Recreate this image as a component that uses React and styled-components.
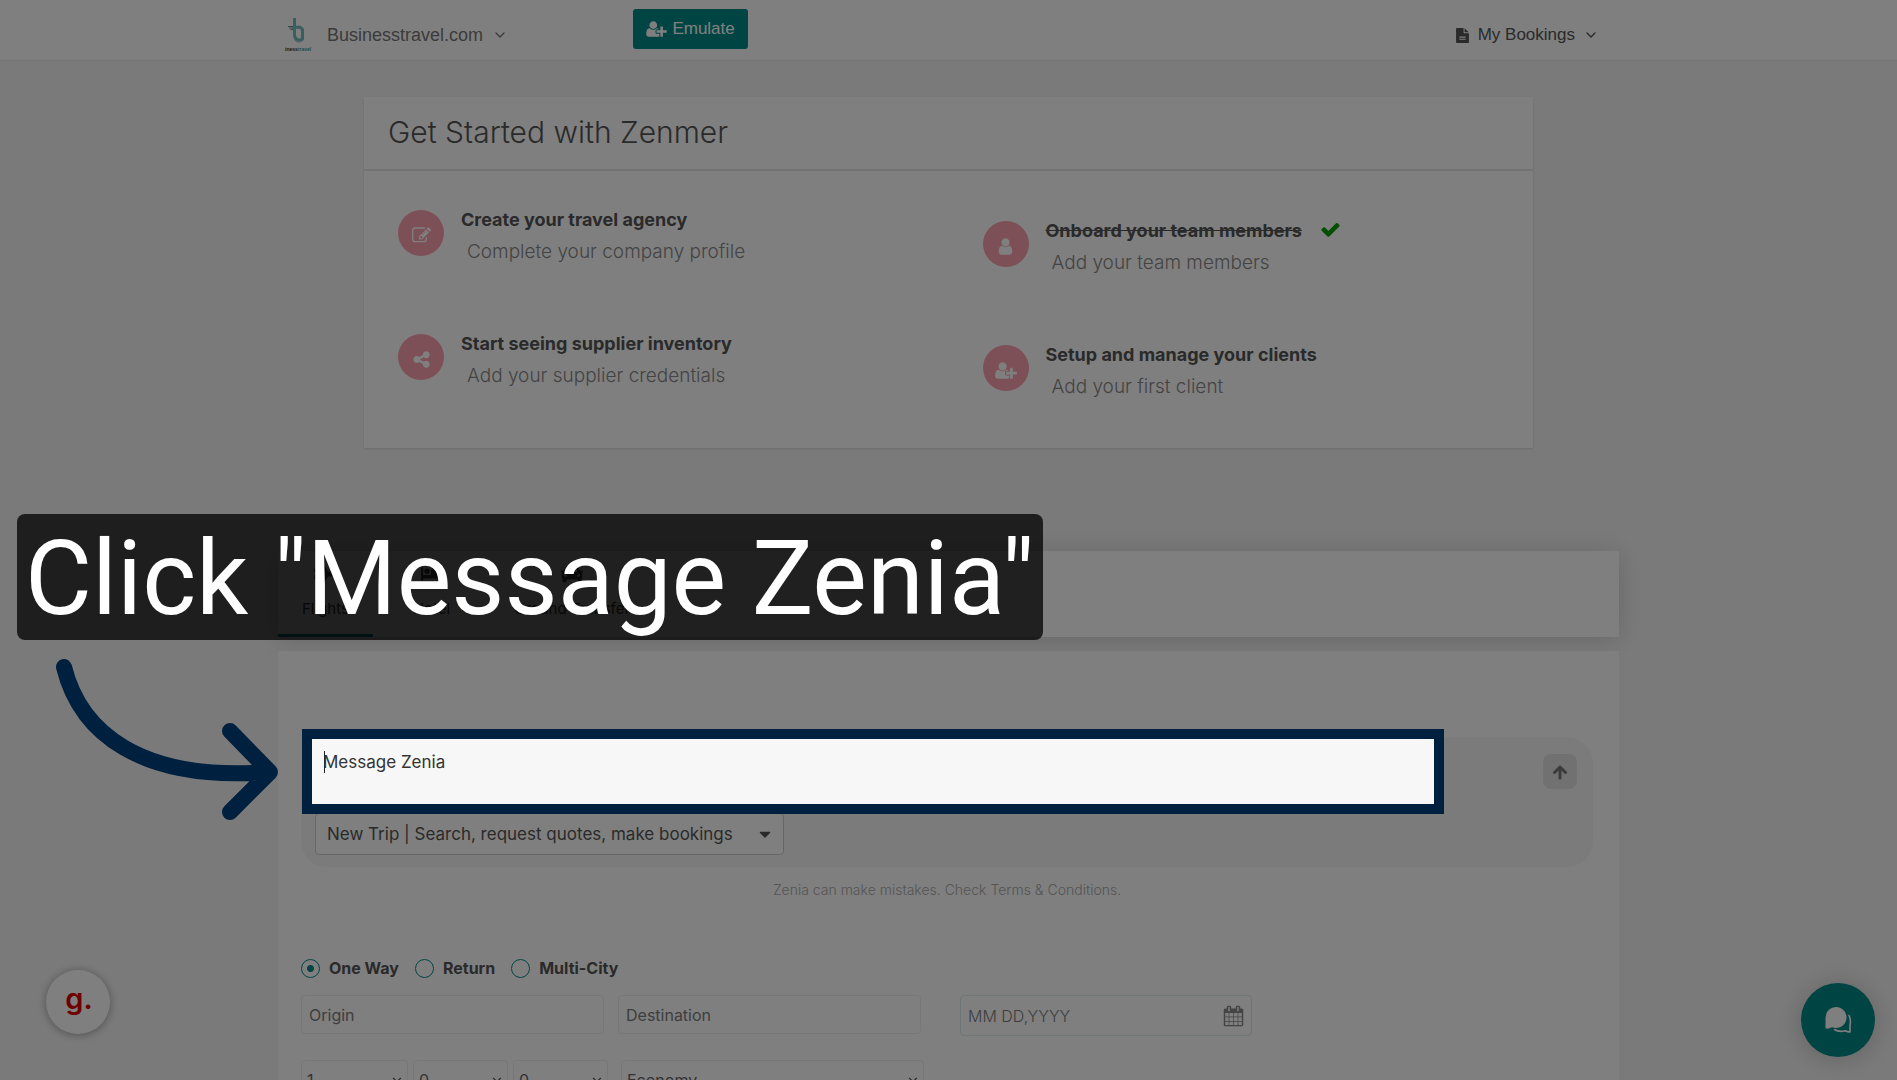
import React from 'react';
import styled, { ThemeProvider, createGlobalStyle } from 'styled-components';
import { FaPlane, FaBed, FaCar, FaCaretDown } from 'react-icons/fa';
import { FiChevronDown } from 'react-icons/fi';

const theme = {
  font: '"Inter", "Open Sans", sans-serif',
  headerFont: '"Liberation Sans", Arial, sans-serif',
  colors: {
    bg: '#f5f5f5',
    panel: '#ffffff',
    teal: '#008b86',
    pink: '#fba0ae',
    navy: '#00203f',
    text: '#555555',
    line: '#eeeeee',
  },
};

const GlobalStyle = createGlobalStyle`
  * {
    box-sizing: border-box;
  }

  body {
    margin: 0;
    background: #f5f5f5;
  }
`;

const Page = styled.div`
  position: relative;
  height: 100vh;
  overflow: hidden;
  font-family: ${(props) => props.theme.font};
  color: ${(props) => props.theme.colors.text};
  background: ${(props) => props.theme.colors.bg};
`;

const Container = styled.div`
  width: 100%;
  max-width: 1341px;
  margin: 0 auto;
`;

const Header = styled.header`
  background: ${(props) => props.theme.colors.panel};
  border-bottom: 1px solid #ebebeb;
  font-family: ${(props) => props.theme.headerFont};
`;

const HeaderInner = styled(Container)`
  display: flex;
  height: 60px;
  padding: 9px 20px 0 6px;
`;

const MenuButton = styled.button`
  display: flex;
  align-items: center;
  gap: ${(props) => props.$gap};
  height: 52px;
  padding: 0;
  border: 0;
  background: none;
  font-family: inherit;
  font-size: ${(props) => props.$size};
  color: ${(props) => props.$color};
`;

const EmulateButton = styled.button`
  display: flex;
  align-items: center;
  justify-content: center;
  gap: 5px;
  width: 115px;
  height: 40px;
  margin: 0 auto 0 125px;
  border: 0;
  border-radius: 3px;
  background: ${(props) => props.theme.colors.teal};
  color: #ffffff;
  font-family: inherit;
  font-size: 17px;
`;

const StartCard = styled.section`
  max-width: 1169px;
  margin: 36px auto 0;
  background: ${(props) => props.theme.colors.panel};
  box-shadow: 0 1px 2px rgba(0, 0, 0, 0.12);
`;

const StartTitle = styled.h1`
  margin: 0;
  padding: 17px 24px 19px;
  border-bottom: 2px solid #e4e4e4;
  font-size: 30px;
  font-weight: 300;
  line-height: 36px;
`;

const Steps = styled.div`
  display: grid;
  grid-template-columns: 1fr 1fr;
`;

const StepColumn = styled.div`
  display: flex;
  flex-direction: column;
  gap: 60px;
  padding: ${(props) => (props.$low ? '48px 34px 41px' : '37px 34px 52px')};
`;

const Step = styled.div`
  display: flex;
  gap: 17px;
  height: 64px;
`;

const StepIcon = styled.span`
  display: flex;
  align-items: center;
  justify-content: center;
  flex: none;
  width: 46px;
  height: 46px;
  margin-top: 2px;
  padding-top: 4px;
  border-radius: 50%;
  background: ${(props) => props.theme.colors.pink};
  color: #ffffff;
`;

const StepTitle = styled.h2`
  display: flex;
  gap: 18px;
  margin: 0;
  font-size: 18px;
  font-weight: 700;
  line-height: 24px;
`;

const StepText = styled.p`
  margin: 6px 0 0 6px;
  font-size: 19px;
  font-weight: 300;
  line-height: 28px;
  color: #888888;
`;

const Tabs = styled.nav`
  display: flex;
  gap: 16px;
  height: 86px;
  margin-top: 103px;
  background: ${(props) => props.theme.colors.panel};
  box-shadow: 0 2px 24px rgba(0, 0, 0, 0.16);
`;

const Tab = styled.a`
  display: flex;
  flex-direction: column;
  align-items: center;
  gap: 12px;
  padding: 12px 24px 0;
  border-bottom: 3px solid ${(props) => (props.$active ? props.theme.colors.teal : 'transparent')};
  color: #444444;
  font-size: 15px;
  line-height: 24px;
  text-decoration: none;
`;

const SearchPanel = styled.main`
  margin-top: 14px;
  padding: 86px 26px 40px 23px;
  background: ${(props) => props.theme.colors.panel};
`;

const Composer = styled.div`
  display: grid;
  grid-template-columns: 1fr 34px;
  gap: 9px 109px;
  padding: 2px 16px 12px 11px;
  border-radius: 26px;
  background: #f7f7f7;
`;

// The large spread dims everything around the message box,
// the gradient is the text cursor.
const MessageBox = styled.textarea`
  position: relative;
  z-index: 10;
  display: block;
  width: 100%;
  height: 65px;
  padding: 11px;
  border: 0;
  outline: 0;
  resize: none;
  background: linear-gradient(#222222, #222222) 12px 12px / 1px 22px no-repeat #f7f7f7;
  box-shadow: 0 0 0 10px ${(props) => props.theme.colors.navy}, 0 0 0 3000px rgba(0, 0, 0, 0.5);
  caret-color: transparent;
  font-family: inherit;
  font-size: 17px;
  line-height: 24px;

  &::placeholder {
    color: #333333;
    opacity: 1;
  }
`;

const SendButton = styled.button`
  display: flex;
  align-items: center;
  justify-content: center;
  width: 34px;
  height: 35px;
  margin-top: 15px;
  padding: 0;
  border: 0;
  border-radius: 8px;
  background: #e3e3e3;
  color: #777777;
`;

const Field = styled.span`
  position: relative;
  display: block;
  width: ${(props) => props.$width};

  svg {
    position: absolute;
    top: 50%;
    right: ${(props) => props.$inset || '4px'};
    transform: translateY(-50%);
    pointer-events: none;
  }
`;

const TripField = styled(Field)`
  margin-left: 3px;
`;

const control = `
  display: block;
  width: 100%;
  border-radius: 4px;
  background: #ffffff;
  outline: 0;
  appearance: none;
  font-family: inherit;
`;

const TripSelect = styled.select`
  ${control}
  height: 42px;
  margin: 0;
  padding: 0 11px;
  border: 1px solid #cccccc;
  color: #555555;
  font-size: 17px;
`;

const Select = styled.select`
  ${control}
  height: 40px;
  padding: 0 5px;
  border: 1px solid ${(props) => props.theme.colors.line};
  color: #666666;
  font-size: 16px;
`;

const Input = styled.input`
  ${control}
  height: ${(props) => props.$height || '39px'};
  padding: 0 7px;
  border: 1px solid ${(props) => props.$border || props.theme.colors.line};
  font-size: 16px;
  font-weight: ${(props) => props.$weight || 400};

  &::placeholder {
    color: #7d7d7d;
    opacity: 1;
  }
`;

const Notice = styled.p`
  margin: 13px 0 0;
  text-align: center;
  font-size: 14px;
  font-weight: 300;
  line-height: 20px;
  color: #aaaaaa;
`;

const RadioRow = styled.div`
  display: flex;
  gap: 16px;
  margin-top: 56px;
`;

const RadioLabel = styled.label`
  display: flex;
  align-items: center;
  gap: 9px;
  font-size: 16px;
  font-weight: 700;
  line-height: 24px;
`;

const Radio = styled.input`
  appearance: none;
  width: 19px;
  height: 19px;
  margin: 0;
  border: 1px solid ${(props) => props.theme.colors.teal};
  border-radius: 50%;

  &:checked {
    background: radial-gradient(circle, ${(props) => props.theme.colors.teal} 3px, transparent 4px);
  }
`;

const FieldRow = styled.div`
  display: flex;
  align-items: flex-start;
  gap: ${(props) => props.$gap};
  margin-top: ${(props) => props.$top};
`;

const DateSlot = styled.div`
  margin-left: 25px;
`;

const CabinSlot = styled.div`
  margin-left: 8px;
`;

const HelpBadge = styled.button`
  position: absolute;
  left: 46px;
  bottom: 46px;
  z-index: 5;
  width: 64px;
  height: 64px;
  padding: 0 0 6px 2px;
  border: 0;
  border-radius: 50%;
  background: #ffffff;
  box-shadow: 0 1px 10px rgba(0, 0, 0, 0.35);
  color: #dd0000;
  font-family: inherit;
  font-size: 29px;
  font-weight: 600;
  line-height: 40px;
`;

const ChatButton = styled.button`
  position: absolute;
  right: 22px;
  bottom: 23px;
  z-index: 5;
  display: flex;
  align-items: center;
  justify-content: center;
  width: 74px;
  height: 74px;
  padding: 0;
  border: 0;
  border-radius: 50%;
  background: ${(props) => props.theme.colors.teal};
  box-shadow: 0 2px 26px rgba(0, 0, 0, 0.2);
`;

const Caption = styled.div`
  position: absolute;
  top: 514px;
  left: 17px;
  z-index: 20;
  padding: 4px 8px 0;
  border-radius: 8px;
  background: rgba(0, 0, 0, 0.75);
  color: #ffffff;
  font-family: Roboto, sans-serif;
  font-size: 103px;
  line-height: 122px;
  white-space: nowrap;
`;

const Arrow = styled.svg`
  position: absolute;
  top: 656px;
  left: 52px;
  z-index: 20;
`;

const glyphs = {
  edit: 'M888 1184l116-116-152-152-116 116v56h96v96h56zm440-720q-16-16-33 1l-350 350q-17 17-1 33t33-1l350-350q17-17 1-33zm80 594v190q0 119-84.5 203.5t-203.5 84.5h-832q-119 0-203.5-84.5t-84.5-203.5v-832q0-119 84.5-203.5t203.5-84.5h832q63 0 117 25 15 7 18 23 3 17-9 29l-49 49q-14 14-32 8-23-6-45-6h-832q-66 0-113 47t-47 113v832q0 66 47 113t113 47h832q66 0 113-47t47-113v-126q0-13 9-22l64-64q15-15 35-7t20 29zm-96-738l288 288-672 672h-288v-288zm444 132l-92 92-288-288 92-92q28-28 68-28t68 28l152 152q28 28 28 68t-28 68z',
  share: 'M1344 1024q133 0 226.5 93.5t93.5 226.5-93.5 226.5-226.5 93.5-226.5-93.5-93.5-226.5q0-12 2-34l-360-180q-92 86-218 86-133 0-226.5-93.5t-93.5-226.5 93.5-226.5 226.5-93.5q126 0 218 86l360-180q-2-22-2-34 0-133 93.5-226.5t226.5-93.5 226.5 93.5 93.5 226.5-93.5 226.5-226.5 93.5q-126 0-218-86l-360 180q2 22 2 34t-2 34l360 180q92-86 218-86z',
  user: 'M1536 1399q0 109-62.5 187t-150.5 78h-854q-88 0-150.5-78t-62.5-187q0-85 8.5-160.5t31.5-152 58.5-131 94-89 134.5-34.5q131 128 313 128t313-128q76 0 134.5 34.5t94 89 58.5 131 31.5 152 8.5 160.5zm-256-887q0 159-112.5 271.5t-271.5 112.5-271.5-112.5-112.5-271.5 112.5-271.5 271.5-112.5 271.5 112.5 112.5 271.5z',
  userPlus: 'M704 896q-159 0-271.5-112.5t-112.5-271.5 112.5-271.5 271.5-112.5 271.5 112.5 112.5 271.5-112.5 271.5-271.5 112.5zm960 128h352q13 0 22.5 9.5t9.5 22.5v192q0 13-9.5 22.5t-22.5 9.5h-352v352q0 13-9.5 22.5t-22.5 9.5h-192q-13 0-22.5-9.5t-9.5-22.5v-352h-352q-13 0-22.5-9.5t-9.5-22.5v-192q0-13 9.5-22.5t22.5-9.5h352v-352q0-13 9.5-22.5t22.5-9.5h192q13 0 22.5 9.5t9.5 22.5v352zm-736 224q0 52 38 90t90 38h256v238q-68 50-171 50h-874q-121 0-194-69t-73-190q0-53 3.5-103.5t14-109 26.5-108.5 43-97.5 62-81 85.5-53.5 111.5-20q19 0 39 17 79 61 154.5 91.5t164.5 30.5 164.5-30.5 154.5-91.5q20-17 39-17 132 0 217 96h-223q-52 0-90 38t-38 90v192z',
  check: 'M1671 566q0 40-28 68l-724 724-136 136q-28 28-68 28t-68-28l-136-136-362-362q-28-28-28-68t28-68l136-136q28-28 68-28t68 28l294 295 656-657q28-28 68-28t68 28l136 136q28 28 28 68z',
  file: 'M1596 476q14 14 28 36h-472v-472q22 14 36 28zm-476 164h544v1056q0 40-28 68t-68 28h-1344q-40 0-68-28t-28-68v-1600q0-40 28-68t68-28h800v544q0 40 28 68t68 28zm160 736v-64q0-14-9-23t-23-9h-704q-14 0-23 9t-9 23v64q0 14 9 23t23 9h704q14 0 23-9t9-23zm0-256v-64q0-14-9-23t-23-9h-704q-14 0-23 9t-9 23v64q0 14 9 23t23 9h704q14 0 23-9t9-23z',
  calendar: 'M192 1664h288v-288h-288v288zm352 0h320v-288h-320v288zm-352-352h288v-320h-288v320zm352 0h320v-320h-320v320zm-352-384h288v-288h-288v288zm736 736h320v-288h-320v288zm-384-736h320v-288h-320v288zm768 736h288v-288h-288v288zm-384-352h320v-320h-320v320zm-352-864v-288q0-13-9.5-22.5t-22.5-9.5h-64q-13 0-22.5 9.5t-9.5 22.5v288q0 13 9.5 22.5t22.5 9.5h64q13 0 22.5-9.5t9.5-22.5zm736 864h288v-320h-288v320zm-384-384h320v-288h-320v288zm384 0h288v-288h-288v288zm32-480v-288q0-13-9.5-22.5t-22.5-9.5h-64q-13 0-22.5 9.5t-9.5 22.5v288q0 13 9.5 22.5t22.5 9.5h64q13 0 22.5-9.5t9.5-22.5zm384-64v1280q0 52-38 90t-90 38h-1408q-52 0-90-38t-38-90v-1280q0-52 38-90t90-38h128v-96q0-66 47-113t113-47h64q66 0 113 47t47 113v96h384v-96q0-66 47-113t113-47h64q66 0 113 47t47 113v96h128q52 0 90 38t38 90z',
};

function Glyph({ name, size, wide, color }) {
  return (
    <svg
      width={wide ? Math.round((size * 8) / 7) : size}
      height={size}
      viewBox={wide ? '0 0 2048 1792' : '0 0 1792 1792'}
      fill={color || 'currentColor'}
      aria-hidden="true"
    >
      <path d={glyphs[name]} />
    </svg>
  );
}

function Logo() {
  return (
    <svg width="29" height="38" viewBox="0 0 29 38" fill="none" aria-hidden="true">
      <path d="M4 10.500H14.500M5 12H13M6.500 13.500H12" stroke="#6b8f90" strokeWidth="1" />
      <path d="M10.500 2V19a5 5 0 0 0 8 4V13.500a5 5 0 0 0-6-2" stroke="#6fc0c2" strokeWidth="3" />
      <path d="M14 10.500c4 0 5.500 3 5.500 8.500 0 5-2 7-5 7s-4-2-4-5" stroke="#85b5b6" strokeWidth="1" />
      <text x="1" y="35" fontSize="5" fontWeight="700" fontFamily="Liberation Sans" fill="#333333">
        iness<tspan fill="#3aa0a3">travel</tspan>
      </text>
    </svg>
  );
}

const leftSteps = [
  { icon: 'edit', title: 'Create your travel agency', text: 'Complete your company profile' },
  { icon: 'share', title: 'Start seeing supplier inventory', text: 'Add your supplier credentials' },
];

const rightSteps = [
  { icon: 'user', title: 'Onboard your team members', text: 'Add your team members', done: true },
  { icon: 'userPlus', wide: true, title: 'Setup and manage your clients', text: 'Add your first client' },
];

function StepList({ steps, low }) {
  return (
    <StepColumn $low={low}>
      {steps.map((step) => (
        <Step key={step.title}>
          <StepIcon>
            <Glyph name={step.icon} size={19} wide={step.wide} />
          </StepIcon>
          <div>
            <StepTitle>
              {step.done ? <s>{step.title}</s> : step.title}
              {step.done && <Glyph name="check" size={21} color="#00a000" />}
            </StepTitle>
            <StepText>{step.text}</StepText>
          </div>
        </Step>
      ))}
    </StepColumn>
  );
}

function CountSelect({ label, value, width }) {
  return (
    <Field $width={width}>
      <Select aria-label={label} defaultValue={value}>
        <option>{value}</option>
      </Select>
      <FiChevronDown size={14} />
    </Field>
  );
}

function App() {
  return (
    <ThemeProvider theme={theme}>
      <GlobalStyle />
      <Page>
        <Header>
          <HeaderInner>
            <MenuButton type="button" $gap="9px" $size="18px" $color="#777777">
              <Logo />
              <span>&nbsp;Businesstravel.com</span>
              <FiChevronDown size={16} />
            </MenuButton>
            <EmulateButton type="button">
              <Glyph name="userPlus" size={18} wide />
              Emulate
            </EmulateButton>
            <MenuButton type="button" $gap="8px" $size="17px" $color="#555555">
              <Glyph name="file" size={15} />
              My Bookings
              <FiChevronDown size={16} />
            </MenuButton>
          </HeaderInner>
        </Header>

        <StartCard>
          <StartTitle>Get Started with Zenmer</StartTitle>
          <Steps>
            <StepList steps={leftSteps} />
            <StepList steps={rightSteps} low />
          </Steps>
        </StartCard>

        <Container>
          <Tabs>
            <Tab href="#flights" $active>
              <FaPlane size={22} />
              Flights
            </Tab>
            <Tab href="#hotel">
              <FaBed size={22} />
              Hotel
            </Tab>
            <Tab href="#ground">
              <FaCar size={22} />
              Ground Transfer
            </Tab>
          </Tabs>

          <SearchPanel>
            <Composer>
              <MessageBox aria-label="Message Zenia" placeholder="Message Zenia" autoFocus />
              <SendButton type="button" aria-label="Send">
                <svg width="16" height="16" viewBox="0 0 16 16" fill="none" stroke="currentColor" strokeWidth="3">
                  <path d="M8 14V3M2.500 8.500L8 3l5.500 5.500" strokeLinecap="round" strokeLinejoin="round" />
                </svg>
              </SendButton>
              <TripField $width="469px" $inset="10px">
                <TripSelect aria-label="Request type">
                  <option>New Trip | Search, request quotes, make bookings</option>
                </TripSelect>
                <FaCaretDown size={18} />
              </TripField>
            </Composer>
            <Notice>Zenia can make mistakes. Check Terms &amp; Conditions.</Notice>

            <RadioRow>
              <RadioLabel>
                <Radio type="radio" name="trip" defaultChecked />
                One Way
              </RadioLabel>
              <RadioLabel>
                <Radio type="radio" name="trip" />
                Return
              </RadioLabel>
              <RadioLabel>
                <Radio type="radio" name="trip" />
                Multi-City
              </RadioLabel>
            </RadioRow>

            <FieldRow $gap="14px" $top="15px">
              <Field $width="303px">
                <Input aria-label="Origin" placeholder="Origin" />
              </Field>
              <Field $width="303px">
                <Input aria-label="Destination" placeholder="Destination" />
              </Field>
              <DateSlot>
                <Field $width="292px" $inset="8px">
                  <Input aria-label="Date" placeholder="MM DD,YYYY" $height="41px" $border="#dfe8ee" $weight={300} />
                  <Glyph name="calendar" size={21} color="#888888" />
                </Field>
              </DateSlot>
            </FieldRow>

            <FieldRow $gap="5px" $top="24px">
              <CountSelect label="Adults" value="1" width="107px" />
              <CountSelect label="Children" value="0" width="95px" />
              <CountSelect label="Infants" value="0" width="95px" />
              <CabinSlot>
                <CountSelect label="Cabin" value="Economy" width="303px" />
              </CabinSlot>
            </FieldRow>
          </SearchPanel>
        </Container>

        <HelpBadge type="button">g.</HelpBadge>
        <ChatButton type="button" aria-label="Open chat">
          <svg width="28" height="28" viewBox="0 0 28 28" fill="none">
            <path d="M12 1a10.500 10.500 0 1 1-4 20.200c-2 1.200-4.500 1.600-6.500 1.300V11.500A10.500 10.500 0 0 1 12 1z" fill="#ffffff" />
            <path d="M25 9.500c1.500 3 1.700 6.500 1 9.500v7c-2 0-3.500-.5-5-1.200-4 1-8 .4-10.500-1.300" stroke="#ffffff" strokeWidth="1.600" strokeLinecap="round" strokeLinejoin="round" />
          </svg>
        </ChatButton>

        <Caption>Click "Message Zenia"</Caption>
        <Arrow width="228" height="168" viewBox="0 0 228 168" fill="none" stroke="#00203f" strokeWidth="16">
          <path d="M12 11C28 76 88 126 216 116M178 75L218 116L178 156" strokeLinecap="round" strokeLinejoin="round" />
        </Arrow>
      </Page>
    </ThemeProvider>
  );
}

export default App;
